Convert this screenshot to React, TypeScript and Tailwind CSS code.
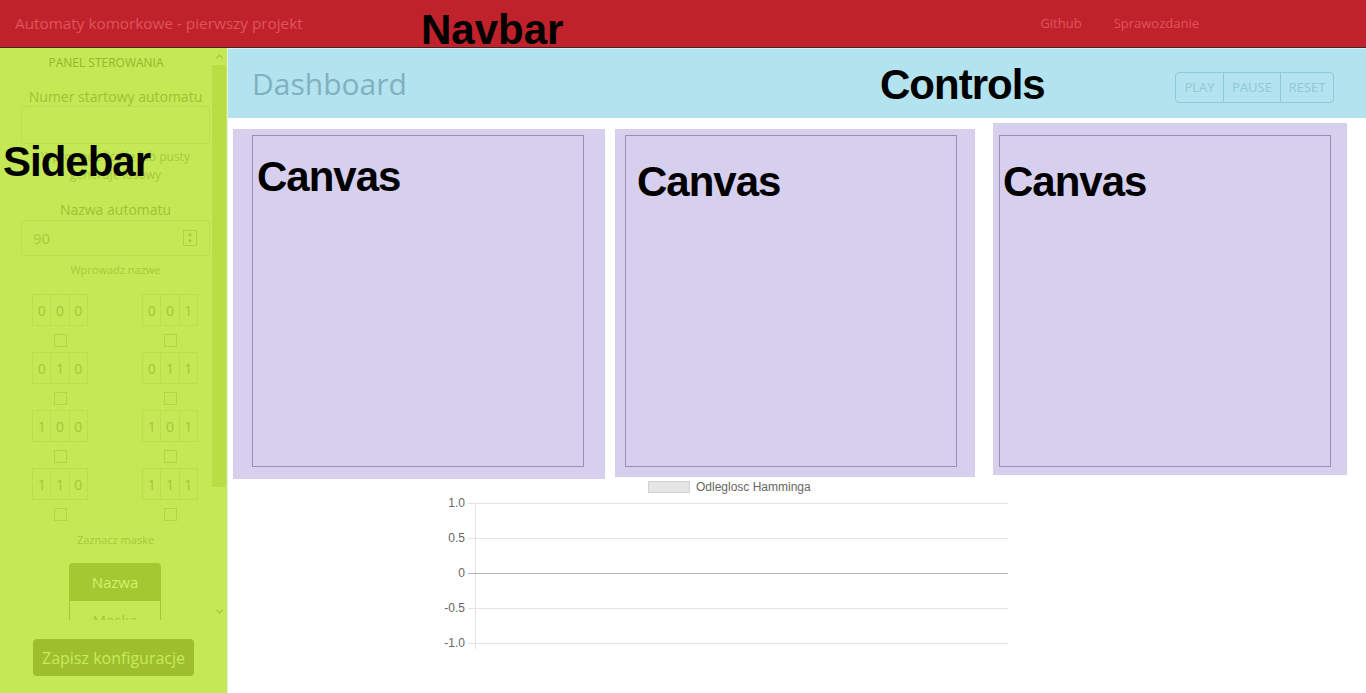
import { ChevronUp, ChevronDown } from "lucide-react";

const rules = [
  ["000", "001"],
  ["010", "011"],
  ["100", "101"],
  ["110", "111"],
];

function RuleBox({ bits }: { bits: string }) {
  return (
    <div className="flex flex-col items-center">
      <div className="flex h-[32px] w-[56px] border border-[#bcdf4d]">
        {bits.split("").map((b, i) => (
          <div
            key={i}
            className="flex flex-1 items-center justify-center border-l border-[#bcdf4d] text-[14px] text-[#a3c73a] first:border-l-0"
          >
            {b}
          </div>
        ))}
      </div>
      <div className="mt-[8px] h-[13px] w-[13px] border border-[#b3d643]" />
    </div>
  );
}

function Sidebar() {
  return (
    <aside className="relative flex w-[228px] shrink-0 flex-col border-r border-[#e6ecec] bg-[#c5e855] font-['Open_Sans',sans-serif]">
      <div className="flex h-[572px] shrink-0">
        <div className="flex w-[212px] flex-col overflow-hidden *:shrink-0">
          <div className="mt-[7px] text-center text-[12px] leading-4 text-[#93b82c]">PANEL STEROWANIA</div>
          {/* form group: 21px .. 210px */}
          <div className="ml-[21px] mr-[2px] flex flex-col">
            <div className="mt-[17px] text-center text-[14px] leading-[18px] text-[#9dc236]">Numer startowy automatu</div>
            <div className="h-[38px] rounded-[4px] border border-[#bcdf4d]" />
            <div className="mt-[4px] text-center text-[12px] leading-[18px] text-[#a6ca3c]">
              Wprowadz liczbe lub pusty generuje losowy
            </div>
            <div className="mt-[16px] text-center text-[14px] leading-5 text-[#9dc236]">Nazwa automatu</div>
            <div className="flex h-[36px] items-center justify-between rounded-[4px] border border-[#bcdf4d] pl-[11px] pr-[12px]">
              <span className="text-[15px] text-[#a7cb3d]">90</span>
              <div className="flex h-[16px] w-[14px] flex-col items-center justify-center border border-[#b0d440] text-[#a7cb3d]">
                <span className="text-[6px] leading-[7px]">▲</span>
                <span className="text-[6px] leading-[7px]">▼</span>
              </div>
            </div>
            <div className="mt-[6px] text-center text-[11px] leading-4 text-[#a6ca3c]">Wprowadz nazwe</div>
          </div>
          <div className="mt-[16px] flex flex-col gap-[5px] pl-[32px]">
            {rules.map((row, i) => (
              <div key={i} className="flex gap-[54px]">
                {row.map((bits) => (
                  <RuleBox key={bits} bits={bits} />
                ))}
              </div>
            ))}
          </div>
          <div className="ml-[21px] mr-[2px] mt-[11px] text-center text-[11px] leading-4 text-[#a6ca3c]">Zaznacz maske</div>
          <div className="ml-[69px] mt-[15px] flex w-[92px] flex-col">
            <div className="flex h-[38px] items-center justify-center rounded-t-[4px] bg-[#a4c832] text-[15px] text-[#d4f16a]">
              Nazwa
            </div>
            <div className="flex h-[38px] items-center justify-center border-x border-[#a4c832] text-[15px] text-[#a4c832]">
              Maska
            </div>
          </div>
        </div>
        <div className="flex w-[14px] flex-col">
          <div className="flex h-[17px] items-center justify-center text-[#a5cb36]">
            <ChevronUp size={11} strokeWidth={3} />
          </div>
          <div className="h-[422px] bg-[#b9de45]" />
          <div className="flex-1" />
          <div className="flex h-[17px] items-center justify-center text-[#a5cb36]">
            <ChevronDown size={11} strokeWidth={3} />
          </div>
        </div>
      </div>
      <div className="ml-[33px] mt-[19px] flex h-[37px] w-[161px] items-center justify-center rounded-[4px] bg-[#9dbf2c] text-[16px] text-[#c9ea5c]">
        Zapisz konfiguracje
      </div>
      <div className="absolute left-[3px] top-[93px] font-['Liberation_Sans',sans-serif] text-[42px] font-bold leading-none tracking-[-1px] text-black">
        Sidebar
      </div>
    </aside>
  );
}

function CanvasPanel({ box, inner }: { box: string; inner: string }) {
  return (
    <div className={`shrink-0 bg-[#d6cfee] ${box}`}>
      <div className={`h-[332px] w-[332px] border border-[#9a8fb4] ${inner}`}>
        <div className="font-['Liberation_Sans',sans-serif] text-[42px] font-bold leading-none tracking-[-1px] text-black">Canvas</div>
      </div>
    </div>
  );
}

function Chart() {
  const ticks = [
    { y: 24, label: "1.0" },
    { y: 59, label: "0.5" },
    { y: 94, label: "0" },
    { y: 129, label: "-0.5" },
    { y: 164, label: "-1.0" },
  ];
  return (
    <svg width="600" height="180" className="ml-[192px] block font-['Liberation_Sans',sans-serif]">
      <rect x="228.5" y="2.5" width="41" height="11" fill="#e5e5e5" stroke="#d2d2d2" />
      <text x="276" y="12" fontSize="12" fill="#666">Odleglosc Hamminga</text>
      <line x1="55.5" y1="24" x2="55.5" y2="170" stroke="#e3e3e3" />
      {ticks.map((t) => (
        <g key={t.label}>
          <line x1="48" y1={t.y + 0.5} x2="588" y2={t.y + 0.5} stroke={t.label === "0" ? "#b5b5b5" : "#e3e3e3"} />
          <text x="45" y={t.y + 4} fontSize="12" fill="#666" textAnchor="end">{t.label}</text>
        </g>
      ))}
    </svg>
  );
}

export default function App() {
  return (
    <div className="flex h-[693px] w-[1366px] flex-col overflow-hidden bg-white">
      <nav className="relative flex h-[48px] shrink-0 items-center border-b border-[#4a2226] bg-[#c0222b] font-['Open_Sans',sans-serif] text-[#e0525c]">
        <span className="ml-[15px] text-[15.3px]">Automaty komorkowe - pierwszy projekt</span>
        <div className="ml-auto mr-[167px] flex gap-[32px] text-[13px]">
          <span>Github</span>
          <span>Sprawozdanie</span>
        </div>
        <div className="absolute left-[421px] top-[9px] z-10 font-['Liberation_Sans',sans-serif] text-[42px] font-bold leading-none text-black">
          Navbar
        </div>
      </nav>
      <div className="flex flex-1">
        <Sidebar />
        <main className="flex flex-1 flex-col">
          <div className="relative flex h-[70px] shrink-0 items-center border-t border-[#d8f0f5] bg-[#b2e3ee] pl-[24px] pr-[32px]">
            <h1 className="font-['Open_Sans',sans-serif] text-[30px] text-[#7fb1c1]">Dashboard</h1>
            <div className="absolute left-[652px] top-[15px] font-['Liberation_Sans',sans-serif] text-[42px] font-bold leading-none tracking-[-1px] text-black">
              Controls
            </div>
            <div className="ml-auto mt-[8px] flex h-[31px] rounded-[4px] border border-[#8fc8d6] font-['Open_Sans',sans-serif] text-[13px] text-[#8fc8d6]">
              <div className="flex w-[47px] items-center justify-center">PLAY</div>
              <div className="flex w-[57px] items-center justify-center border-l border-[#8fc8d6]">PAUSE</div>
              <div className="flex w-[53px] items-center justify-center border-l border-[#8fc8d6]">RESET</div>
            </div>
          </div>
          <div className="flex items-start">
            <CanvasPanel box="ml-[5px] mt-[11px] h-[350px] w-[372px] pl-[19px] pt-[6px]" inner="pl-[4px] pt-[20px]" />
            <CanvasPanel box="ml-[10px] mt-[11px] h-[348px] w-[360px] pl-[10px] pt-[6px]" inner="pl-[11px] pt-[25px]" />
            <CanvasPanel box="ml-[18px] mt-[5px] h-[352px] w-[354px] pl-[6px] pt-[12px]" inner="pl-[3px] pt-[25px]" />
          </div>
          <Chart />
        </main>
      </div>
    </div>
  );
}
